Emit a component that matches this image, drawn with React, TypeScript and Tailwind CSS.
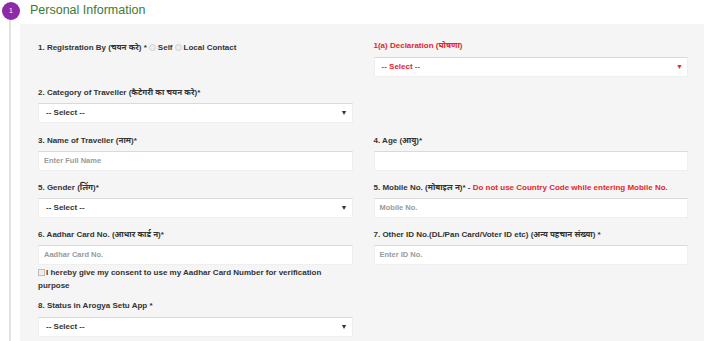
import { ReactNode } from "react"

const font = { fontFamily: '"Liberation Sans", Arial, "Noto Sans", sans-serif' }

function Select({ red = false }: { red?: boolean }) {
  return (
    <div className="flex h-[20px] items-center justify-between border border-[#efefef] border-t-[#d9d9d9] bg-white pl-[7px] pr-[4px]">
      <span className={`text-[8px] font-bold ${red ? "text-[#e4262c]" : "text-[#333]"}`}>-- Select --</span>
      <span className={`text-[7px] ${red ? "text-[#e4262c]" : "text-[#333]"}`}>▼</span>
    </div>
  )
}

function Input({ placeholder = "" }: { placeholder?: string }) {
  return (
    <div className="flex h-[20px] items-center border border-[#efefef] border-t-[#d9d9d9] bg-white pl-[5px]">
      <span className="text-[7.5px] font-bold text-[#9a9a9a]">{placeholder}</span>
    </div>
  )
}

function Label({ children, className = "" }: { children: ReactNode; className?: string }) {
  return <div className={`h-[12px] text-[8px] font-bold leading-[13px] text-[#333] ${className}`}>{children}</div>
}

export default function App() {
  return (
    <div style={font} className="relative h-[341px] w-[704px] overflow-hidden bg-white">
      {/* timeline line */}
      <div className="absolute left-[9px] top-[18px] bottom-0 w-[2px] bg-[#e2e2e2]" />

      {/* header */}
      <div className="flex h-[24px] items-start">
        <div className="relative ml-[2px] mt-[2px] flex h-[18px] w-[18px] items-center justify-center rounded-full bg-[#8e2aa8] text-[7px] text-white">
          1
        </div>
        <div className="ml-[10px] mt-[1px] text-[12.5px] leading-[18px] text-[#3b7a37]">Personal Information</div>
      </div>

      {/* panel */}
      <div className="ml-[20px] h-[317px] bg-[#f5f5f5] pl-[18px] pr-[16px] pt-[15px]">
        {/* row 1 */}
        <div className="grid grid-cols-2 gap-x-[21px]">
          <div className="pt-[2px]">
            <Label className="flex items-center">
              1. Registration By (चयन करे) *
              <span className="mx-[2px] inline-block h-[7px] w-[7px] rounded-full border border-[#cfcfcf] bg-[#eee]" />
              Self
              <span className="mx-[2px] inline-block h-[7px] w-[7px] rounded-full border border-[#cfcfcf] bg-[#eee]" />
              Local Contact
            </Label>
          </div>
          <div>
            <Label className="text-[#e4262c]">1(a) Declaration (घोषणा)</Label>
            <div className="mt-[6px]">
              <Select red />
            </div>
          </div>
        </div>

        {/* row 2 */}
        <div className="mt-[9px] grid grid-cols-2 gap-x-[21px]">
          <div>
            <Label>2. Category of Traveller (कैटेगरी का चयन करे)*</Label>
            <div className="mt-[5px]">
              <Select />
            </div>
          </div>
        </div>

        {/* rows 3-5 */}
        <div className="mt-[11px] grid grid-cols-2 gap-x-[21px] gap-y-[10px]">
          <div>
            <Label>3. Name of Traveller (नाम)*</Label>
            <div className="mt-[5px]">
              <Input placeholder="Enter Full Name" />
            </div>
          </div>
          <div>
            <Label>4. Age (आयु)*</Label>
            <div className="mt-[5px]">
              <Input />
            </div>
          </div>
          <div>
            <Label>5. Gender (लिंग)*</Label>
            <div className="mt-[5px]">
              <Select />
            </div>
          </div>
          <div>
            <Label>
              5. Mobile No. (मोबाइल न)* - <span className="text-[#e4262c]">Do not use Country Code while entering Mobile No.</span>
            </Label>
            <div className="mt-[5px]">
              <Input placeholder="Mobile No." />
            </div>
          </div>
          <div>
            <Label>6. Aadhar Card No. (आधार कार्ड न)*</Label>
            <div className="mt-[5px]">
              <Input placeholder="Aadhar Card No." />
            </div>
            <div className="mt-[1px] pr-[20px] text-[8px] font-bold leading-[13px] text-[#333]">
              <span className="mr-[1px] inline-block h-[7px] w-[7px] border border-[#bbb] bg-[#eee] align-[-1px]" />
              I hereby give my consent to use my Aadhar Card Number for verification purpose
            </div>
            <div className="mt-[7px]">
              <Label>8. Status in Arogya Setu App *</Label>
              <div className="mt-[6px]">
                <Select />
              </div>
            </div>
          </div>
          <div>
            <Label>7. Other ID No.(DL/Pan Card/Voter ID etc) (अन्य पहचान संख्या) *</Label>
            <div className="mt-[5px]">
              <Input placeholder="Enter ID No." />
            </div>
          </div>
        </div>
      </div>
    </div>
  )
}
